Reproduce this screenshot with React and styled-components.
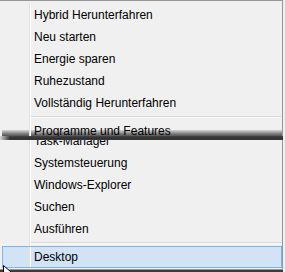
import React from 'react';
import styled, { createGlobalStyle } from 'styled-components';

const Global = createGlobalStyle`
  html, body { margin: 0; padding: 0; background: #f0f0f0; }
  body { font-family: "Liberation Sans", Arial, sans-serif; }
`;

const Page = styled.div`
  position: relative;
  width: 285px;
  height: 272px;
  overflow: hidden;
  background: #f0f0f0;
`;

const Menu = styled.div`
  box-sizing: border-box;
  width: 283px;
  background: #f0f0f0;
  border-top: 1px solid #979797;
  border-right: 1px solid #979797;
  border-bottom: 1px solid #979797;
  padding: 2px 0 1px 2px;
`;

const Clip = styled.div`
  overflow: hidden;
  height: ${p => p.height ? p.height + 'px' : 'auto'};
`;

const Shift = styled.div`
  margin-top: ${p => p.offset}px;
`;

const Item = styled.div`
  box-sizing: border-box;
  display: grid;
  grid-template-columns: ${p => p.active ? '27px' : '28px'} 1fr;
  height: 22px;
  width: 280px;
  font-size: 12px;
  color: #000;
  border: ${p => p.active ? '1px solid #7eb4ea' : 'none'};
  background: ${p => p.active ? '#d1e3f4' : 'transparent'};
  ${p => p.torn && `
    background: linear-gradient(to bottom, transparent 11px, #d4d4d4 11px, #a8a8a8 13px, #777 15px, #555 17px);
  `}
`;

const Gutter = styled.div`
  border-right: 1px solid #e2e2e2;
  box-shadow: 1px 0 0 #fcfcfc;
`;

const Label = styled.div`
  display: flex;
  align-items: center;
  padding-left: 4px;
  padding-top: ${p => p.active ? '0' : '1px'};
  white-space: nowrap;
  position: relative;
`;

const Separator = styled.div`
  display: grid;
  grid-template-columns: 28px 1fr;
  height: ${p => p.size}px;
  width: 280px;
`;

const SepLine = styled.div`
  margin-top: 3px;
  margin-left: 1px;
  height: 1px;
  background: #d7d7d7;
  box-shadow: 0 1px 0 #fafafa;
`;

const Band = styled.div`
  height: 4px;
  margin-left: -2px;
  width: 283px;
  background:
    linear-gradient(to right, rgba(240,240,240,0.85), rgba(240,240,240,0) 10px),
    linear-gradient(to bottom, #444, #303030 60%, #3a3a3a);
`;

const BottomStrip = styled.div`
  width: 283px;
  height: 2px;
  background: #3c3c3c;
`;

const Cursor = styled.svg`
  position: absolute;
  left: 3px;
  top: 265px;
`;

const Row = ({ label, active, torn }) => (
  <Item active={active} torn={torn}>
    <Gutter />
    <Label active={active}>{label}</Label>
  </Item>
);

const Sep = ({ size }) => (
  <Separator size={size}>
    <Gutter />
    <SepLine />
  </Separator>
);

export default function App() {
  return (
    <>
      <Global />
      <Page>
        <Menu>
          <Clip height={133}>
            <Row label="Hybrid Herunterfahren" />
            <Row label="Neu starten" />
            <Row label="Energie sparen" />
            <Row label="Ruhezustand" />
            <Row label="Vollständig Herunterfahren" />
            <Sep size={6} />
            <Row label="Programme und Features" torn />
          </Clip>
          <Band />
          <Clip>
            <Shift offset={-11}>
              <Row label="Task-Manager" />
              <Row label="Systemsteuerung" />
              <Row label="Windows-Explorer" />
              <Row label="Suchen" />
              <Row label="Ausführen" />
              <Sep size={7} />
              <Row label="Desktop" active />
            </Shift>
          </Clip>
        </Menu>
        <BottomStrip />
        <Cursor width="10" height="13" viewBox="0 0 10 13">
          <path d="M0.5 0.5 L0.5 11 L3 8.5 L5 12.5 L7 11.5 L5 7.5 L8.5 7.5 Z" fill="#fff" stroke="#000" strokeWidth="1" />
        </Cursor>
      </Page>
    </>
  );
}
